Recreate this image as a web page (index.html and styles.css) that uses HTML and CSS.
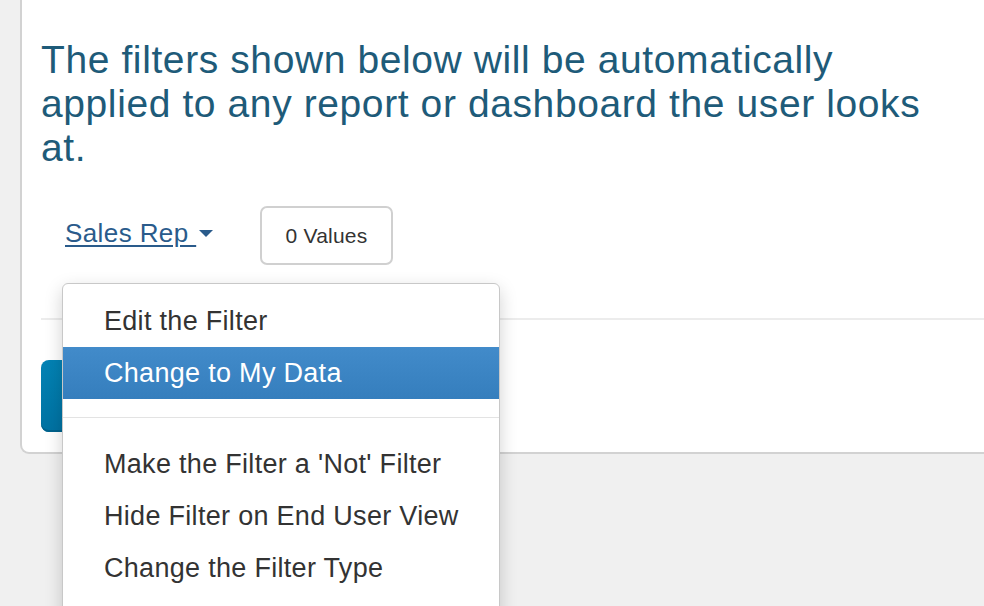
FILE: index.html
```html
<!DOCTYPE html>
<html lang="en">
<head>
<meta charset="utf-8">
<title>Filters</title>
<link rel="stylesheet" href="styles.css">
</head>
<body>
<div class="panel">
  <h1 class="intro">The filters shown below will be automatically applied to any report or dashboard the user looks at.</h1>
  <div class="filter-row">
    <div class="filter-name"><a class="filter-link" href="#">Sales Rep </a><span class="caret"></span></div>
    <button class="values-btn" type="button">0 Values</button>
    <ul class="menu">
      <li class="item">Edit the Filter</li>
      <li class="item active">Change to My Data</li>
      <li class="divider"></li>
      <li class="item">Make the Filter a 'Not' Filter</li>
      <li class="item">Hide Filter on End User View</li>
      <li class="item">Change the Filter Type</li>
    </ul>
  </div>
  <hr class="rule">
  <button class="save-btn" type="button" aria-label="Save"></button>
</div>
</body>
</html>
```
FILE: styles.css
```css
html, body {
  margin: 0;
  padding: 0;
}
body {
  background: #f0f0f0;
  font-family: "Liberation Sans", Helvetica, Arial, sans-serif;
  overflow: hidden;
  width: 984px;
  height: 606px;
}
.panel {
  margin-left: 20px;
  margin-right: -40px;
  background: #fff;
  border: 2px solid #d2d2d2;
  border-top: 0;
  border-radius: 0 0 9px 9px;
  padding: 38px 20px 20px 19px;
}
.intro {
  margin: 0;
  max-width: 905px;
  font-weight: normal;
  font-size: 39px;
  line-height: 44px;
  letter-spacing: 0.6px;
  color: #1e5b79;
}
.filter-row {
  position: relative;
  display: flex;
  align-items: flex-start;
  margin-top: 36px;
  height: 59px;
  padding-left: 24px;
}
.filter-name {
  margin-top: 12px;
  width: 195px;
  font-size: 26px;
  line-height: 30px;
  letter-spacing: 0.4px;
  white-space: nowrap;
}
.filter-link {
  color: #2a5b8b;
  text-decoration: underline;
  text-decoration-thickness: 2px;
  text-underline-offset: 3px;
  white-space: pre;
}
.caret {
  display: inline-block;
  vertical-align: middle;
  width: 0;
  height: 0;
  margin-left: 3px;
  margin-top: -3px;
  border-left: 7px solid transparent;
  border-right: 7px solid transparent;
  border-top: 7px solid #2a5b8b;
}
.values-btn {
  box-sizing: border-box;
  width: 133px;
  height: 59px;
  background: #fff;
  border: 2px solid #d0d0d0;
  border-radius: 7px;
  font-family: inherit;
  font-size: 21px;
  letter-spacing: 0.2px;
  color: #333;
  padding: 0;
}
.menu {
  position: absolute;
  top: 77px;
  left: 21px;
  z-index: 5;
  box-sizing: border-box;
  width: 438px;
  margin: 0;
  padding: 11px 0 30px;
  list-style: none;
  background: #fff;
  border: 1px solid #c8c8c8;
  border-radius: 6px;
  box-shadow: 0 6px 18px rgba(0, 0, 0, 0.18);
}
.item {
  height: 52px;
  line-height: 52px;
  padding-left: 41px;
  font-size: 27px;
  letter-spacing: 0.3px;
  color: #333;
  white-space: nowrap;
}
.item.active {
  color: #fff;
  background: linear-gradient(to bottom, #428bca, #357ebd);
}
.divider {
  height: 1px;
  margin: 18px 0 19px;
  background: #e3e3e3;
  border-bottom: 1px solid #fff;
}
.rule {
  margin: 53px 0 0;
  border: 0;
  height: 2px;
  background: #ececec;
}
.save-btn {
  display: block;
  margin-top: 40px;
  width: 180px;
  height: 72px;
  border: 0;
  border-radius: 8px;
  background: linear-gradient(to bottom, #0382b4, #0072a2);
  box-shadow: inset 0 -2px 0 #00628c;
}
```
